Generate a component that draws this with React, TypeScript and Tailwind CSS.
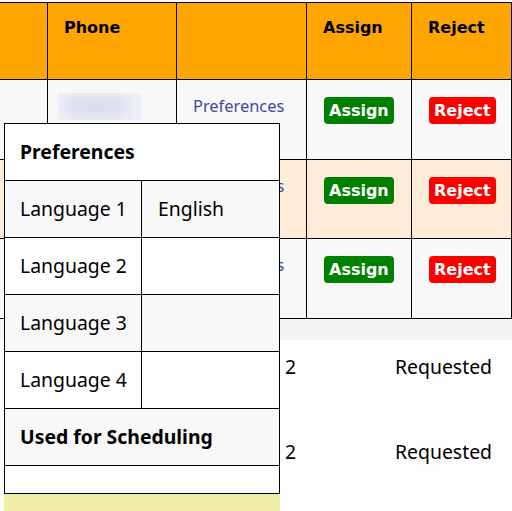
import React from 'react';

const heads = ['', 'Phone', '', 'Assign', 'Reject'];
const widths = ['w-[48px]', 'w-[129px]', 'w-[130px]', 'w-[105px]', 'w-[100px]'];

const rows = [
  { bg: 'bg-[#f8f8f8]', h: 'h-[80px]' },
  { bg: 'bg-[#feecd9]', h: 'h-[79px]' },
  { bg: 'bg-[#f8f8f8]', h: 'h-[80px]' },
];

const prefs = [
  { label: 'Language 1', value: 'English', bg: 'bg-[#f8f8f8]' },
  { label: 'Language 2', value: '', bg: 'bg-white' },
  { label: 'Language 3', value: '', bg: 'bg-[#f8f8f8]' },
  { label: 'Language 4', value: '', bg: 'bg-white' },
];

function Btn({ label, color }: { label: string; color: string }) {
  return (
    <span
      className={`inline-block rounded-[4px] px-[5px] py-1 text-[16px] font-bold leading-[19px] text-white ${color}`}
      style={{ fontFamily: '"DejaVu Sans", Verdana, sans-serif' }}
    >
      {label}
    </span>
  );
}

export default function App() {
  return (
    <div
      className="relative h-[511px] w-[512px] overflow-hidden bg-[#fdfdfd] text-black"
      style={{ fontFamily: '"Noto Sans", "Open Sans", sans-serif' }}
    >
      <div className="pt-[2px]">
        {/* header */}
        <div className="flex h-[78px] border-y border-black bg-[#ffa500]">
          {heads.map((h, i) => (
            <div
              key={i}
              className={`${widths[i]} shrink-0 border-r border-black pl-[16px] pt-[15px] text-[16px] font-bold leading-[19px]`}
              style={{ fontFamily: '"DejaVu Sans", Verdana, sans-serif' }}
            >
              {h}
            </div>
          ))}
        </div>

        {rows.map((r, i) => (
          <div key={i} className={`flex ${r.h} border-b border-black ${r.bg}`}>
            <div className={`${widths[0]} shrink-0 border-r border-black`} />
            <div className={`${widths[1]} shrink-0 border-r border-black pl-[10px] pt-[13px]`}>
              {i === 0 && (
                <div className="relative h-[27px] w-[84px] overflow-hidden bg-[#eef0f6]">
                  <div className="absolute left-[6px] top-[4px] h-[20px] w-[64px] rounded-full bg-[#d9deec] blur-[6px]" />
                </div>
              )}
            </div>
            <div className={`${widths[2]} shrink-0 border-r border-black pl-[16px] pt-[14px]`}>
              <span className="text-[16.4px] leading-[22px] text-[#3a4aa0]">Preferences</span>
            </div>
            <div className={`${widths[3]} shrink-0 border-r border-black pl-[17px] pt-[17px]`}>
              <Btn label="Assign" color="bg-[#008000]" />
            </div>
            <div className={`${widths[4]} shrink-0 border-r border-black pl-[17px] pt-[17px]`}>
              <Btn label="Reject" color="bg-[#ff0000]" />
            </div>
          </div>
        ))}

        <div className="h-[21px] bg-[#f5f5f5]" />

        <div className="pt-[14px] text-[19.4px] leading-[26px]">
          {[0, 1].map((i) => (
            <div key={i} className="flex h-[85px] pl-[285px]">
              <span className="w-[110px]">2</span>
              <span>Requested</span>
            </div>
          ))}
        </div>
      </div>

      {/* preferences popup */}
      <div className="absolute left-[4px] top-[123px] flex w-[276px] flex-col">
        <div className="border border-black bg-white text-[19.4px]">
          <div className="flex h-[57px] items-center border-b border-black px-[15px] font-bold">
            Preferences
          </div>
          {prefs.map((p) => (
            <div key={p.label} className={`flex h-[57px] border-b border-black ${p.bg}`}>
              <div className="flex w-[137px] items-center border-r border-black pl-[15px]">{p.label}</div>
              <div className="flex items-center pl-[16px]">{p.value}</div>
            </div>
          ))}
          <div className="flex h-[57px] items-center border-b border-black bg-[#f8f8f8] px-[15px] font-bold">
            Used for Scheduling
          </div>
          <div className="h-[27px] bg-white" />
        </div>
        <div className="h-[20px] bg-[#efeda6]" />
      </div>
    </div>
  );
}
